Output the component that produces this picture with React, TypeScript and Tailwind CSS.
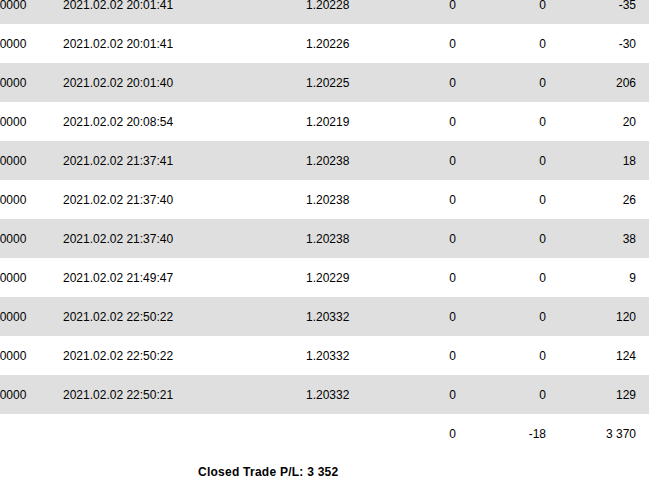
import React from "react";

type Trade = { first: string; time: string; price: string; swap: string; comm: string; profit: string };

const trades: Trade[] = [
  { first: "0.10000", time: "2021.02.02 20:01:41", price: "1.20228", swap: "0", comm: "0", profit: "-35" },
  { first: "0.10000", time: "2021.02.02 20:01:41", price: "1.20226", swap: "0", comm: "0", profit: "-30" },
  { first: "0.10000", time: "2021.02.02 20:01:40", price: "1.20225", swap: "0", comm: "0", profit: "206" },
  { first: "0.10000", time: "2021.02.02 20:08:54", price: "1.20219", swap: "0", comm: "0", profit: "20" },
  { first: "0.10000", time: "2021.02.02 21:37:41", price: "1.20238", swap: "0", comm: "0", profit: "18" },
  { first: "0.10000", time: "2021.02.02 21:37:40", price: "1.20238", swap: "0", comm: "0", profit: "26" },
  { first: "0.10000", time: "2021.02.02 21:37:40", price: "1.20238", swap: "0", comm: "0", profit: "38" },
  { first: "0.10000", time: "2021.02.02 21:49:47", price: "1.20229", swap: "0", comm: "0", profit: "9" },
  { first: "0.10000", time: "2021.02.02 22:50:22", price: "1.20332", swap: "0", comm: "0", profit: "120" },
  { first: "0.10000", time: "2021.02.02 22:50:22", price: "1.20332", swap: "0", comm: "0", profit: "124" },
  { first: "0.10000", time: "2021.02.02 22:50:21", price: "1.20332", swap: "0", comm: "0", profit: "129" },
];

function Row({ t, gray }: { t: Trade; gray: boolean }) {
  return (
    <div className={`flex items-center h-[39px] w-[673px] ${gray ? "bg-[#dfdfdf]" : "bg-white"}`}>
      <div className="w-[87px] pl-[7px] whitespace-nowrap">{t.first}</div>
      <div className="w-[243px] whitespace-nowrap">{t.time}</div>
      <div className="w-[100px]">{t.price}</div>
      <div className="w-[50px] text-right">{t.swap}</div>
      <div className="w-[90px] text-right">{t.comm}</div>
      <div className="w-[90px] text-right">{t.profit}</div>
    </div>
  );
}

export default function App() {
  return (
    <div className="min-h-screen bg-white text-black text-[12px] overflow-hidden" style={{ fontFamily: '"Liberation Sans", Arial, sans-serif' }}>
      <div className="-mt-[15px] -ml-[24px]">
        {trades.map((t, i) => (
          <Row key={i} t={t} gray={i % 2 === 0} />
        ))}
        <div className="flex items-center h-[39px] w-[673px]">
          <div className="w-[430px]" />
          <div className="w-[50px] text-right">0</div>
          <div className="w-[90px] text-right">-18</div>
          <div className="w-[90px] text-right">3 370</div>
        </div>
      </div>
      <div className="h-[37px] flex items-center pl-[198px] font-bold tracking-[0.25px]">Closed Trade P/L: 3 352</div>
    </div>
  );
}
